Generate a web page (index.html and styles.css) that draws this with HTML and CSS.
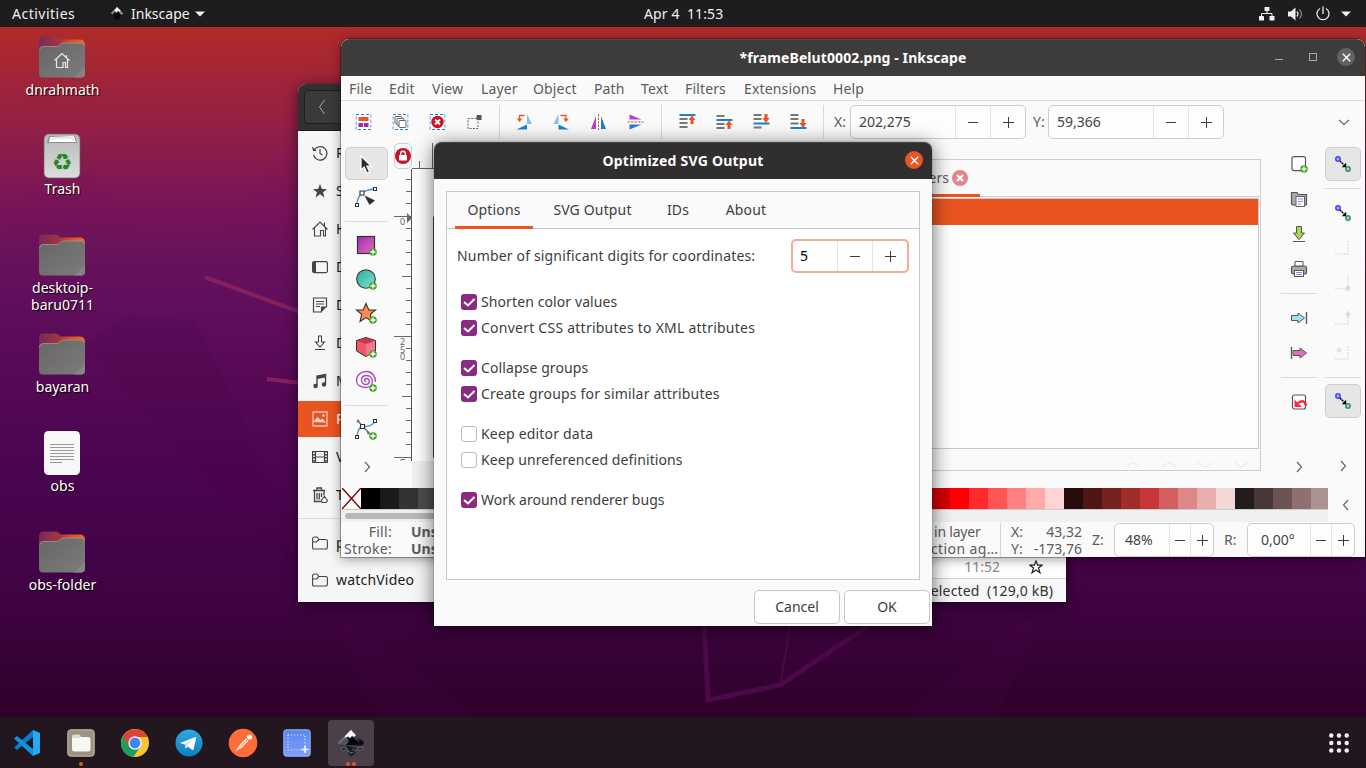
FILE: index.html
```html
<!DOCTYPE html>
<html lang="en">
<head>
<meta charset="utf-8">
<title>Desktop</title>
<link rel="stylesheet" href="styles.css">
</head>
<body>
<svg class="defs" width="0" height="0">
  <defs>
    <linearGradient id="gFolder" x1="0" x2="1"><stop offset="0" stop-color="#77285b"/><stop offset=".45" stop-color="#a5363f"/><stop offset=".7" stop-color="#dd4f22"/><stop offset="1" stop-color="#f0642b"/></linearGradient>
    <linearGradient id="gGrey" x1="0" y1="0" x2="1" y2="1"><stop offset="0" stop-color="#666"/><stop offset="1" stop-color="#7c7c7c"/></linearGradient>
    <linearGradient id="gTrash" x1="0" y1="0" x2="0" y2="1"><stop offset="0" stop-color="#b9b9b9"/><stop offset="1" stop-color="#dcdcdc"/></linearGradient>
    <linearGradient id="gRect" x1="0" y1="0" x2="1" y2="1"><stop offset="0" stop-color="#9b2fae"/><stop offset="1" stop-color="#e86cc0"/></linearGradient>
    <linearGradient id="gCirc" x1="0" y1="0" x2="1" y2="1"><stop offset="0" stop-color="#2fa8a0"/><stop offset="1" stop-color="#7fe6c8"/></linearGradient>
    <linearGradient id="gTele" x1="0" y1="0" x2="0" y2="1"><stop offset="0" stop-color="#2fa9df"/><stop offset="1" stop-color="#0d7fbe"/></linearGradient>
    <linearGradient id="gInk" x1="0" y1="0" x2="1" y2=".6"><stop offset="0" stop-color="#fff"/><stop offset=".3" stop-color="#a9acb3"/><stop offset=".5" stop-color="#15161c"/><stop offset=".75" stop-color="#3c4352"/><stop offset="1" stop-color="#0a0b10"/></linearGradient>
    <linearGradient id="gShot" x1="0" y1="0" x2="0" y2="1"><stop offset="0" stop-color="#5b86ee"/><stop offset="1" stop-color="#7f9ff8"/></linearGradient>
    <symbol id="folder" viewBox="0 0 46 42">
      <path d="M0 5Q0 .5 4 .5H17Q19 .5 20 2L21.500 3.500H41Q46 3.500 46 9V24H0Z" fill="url(#gFolder)"/>
      <path d="M0 15Q0 10.500 4 10.500H18Q20 10.500 21 9L22 8Q23 7 25 7H42Q46 7 46 11V37.500Q46 41.500 42 41.500H4Q0 41.500 0 37.500Z" fill="url(#gGrey)"/>
      <path d="M0.500 14Q1 10.500 4 10.500H18Q20 10.500 21 9L22 8Q23 7 25 7H42Q45 7 45.500 10" fill="none" stroke="#a0a0a0" stroke-width=".7"/>
      <path d="M46 31V37.500Q46 41.500 42 41.500H35.500Z" fill="#858585"/>
    </symbol>
    <symbol id="plusdot" viewBox="0 0 8 8"><circle cx="4" cy="4" r="3.800" fill="#45a52a"/><path d="M4 1.500V6.500M1.500 4H6.500" stroke="#fff" stroke-width="1.400"/></symbol>
    <symbol id="snap" viewBox="0 0 18 18">
      <circle cx="4" cy="4" r="2.200" fill="#9cb0ff" stroke="#4545f5" stroke-width="1.500"/>
      <circle cx="14" cy="14" r="2.200" fill="#9fd0f0" stroke="#3f9150" stroke-width="1.500"/>
      <path d="M6 6L10.500 10.500" stroke="#000" stroke-width="1.400" stroke-dasharray="2 .6"/><path d="M12.200 7.800V12.200H7.800Z" fill="#000"/>
    </symbol>
    <symbol id="minus" viewBox="0 0 12 12"><path d="M1 6.500H11" stroke="#3d3d3d"/></symbol>
    <symbol id="plus" viewBox="0 0 12 12"><path d="M1 6.500H12M6.500 1V12" stroke="#3d3d3d"/></symbol>
    <symbol id="check" viewBox="0 0 16 16"><rect width="16" height="16" rx="3" fill="#8a2a80"/><path d="M3 8L7 11.500L13.500 5" fill="none" stroke="#fff" stroke-width="2"/></symbol>
    <symbol id="right" viewBox="0 0 12 12"><path d="M4 1L8.500 6L4 11" fill="none" stroke="#666" stroke-width="1.200"/></symbol>
    <symbol id="selframe" viewBox="0 0 16 16"><rect x=".5" y=".5" width="15" height="15" fill="none" stroke="#1e82d8" stroke-dasharray="3 2"/></symbol>
  </defs>
</svg>

<header class="topbar">
  <span class="activities">Activities</span>
  <span class="appmenu">
    <svg width="14" height="14" viewBox="0 0 26 26"><path d="M13 0L25 12Q26 15 21 15L17 17L20 20L13 25L7 20L9 17L5 15Q0 15 1 12Z" fill="#080808"/><path d="M1 12L13 0L25 12Q20 17 18 11L15 8L12 12L9 9L5 14Z" fill="#8a8a8a"/><path d="M13 0L20 7L18 9L15 7L12 9L9 7L6 9Z" fill="#f5f5f5"/></svg>
    <span>Inkscape</span>
    <svg width="10" height="6" viewBox="0 0 10 6"><path d="M0 .5H10L5 5.500Z" fill="#f2f2f2"/></svg>
  </span>
  <span class="clock">Apr 4&nbsp; 11:53</span>
  <span class="tray">
    <svg width="16" height="14" viewBox="0 0 16 14" fill="#f0f0f0"><rect x="5.500" y="0" width="5" height="4" rx=".5"/><rect x="0" y="9" width="5" height="4.500" rx=".5"/><rect x="10.500" y="9" width="5" height="4.500" rx=".5"/><path d="M8 4V6.500M2.500 9V6.500H13V9" fill="none" stroke="#f0f0f0"/></svg>
    <svg width="15" height="14" viewBox="0 0 15 14"><path d="M0 4.500H3L7.500 .5V13.500L3 9.500H0Z" fill="#f0f0f0"/><path d="M9 4.500Q11 7 9 9.500" fill="none" stroke="#ddd" stroke-width="1.300"/><path d="M11.500 2.500Q15.500 7 11.500 11.500" fill="none" stroke="#888" stroke-width="1.200"/></svg>
    <svg width="14" height="15" viewBox="0 0 14 15"><path d="M4 2.500A6 6 0 1 0 10 2.500M7 .5V8" fill="none" stroke="#ececec" stroke-width="1.300"/></svg>
    <svg width="10" height="6" viewBox="0 0 10 6"><path d="M0 .5H10L5 5.500Z" fill="#f2f2f2"/></svg>
  </span>
</header>

<main class="desktop">
  <svg class="wallpaper" viewBox="0 27 1366 690" width="1366" height="690">
    <path d="M0 260L190 470L300 565V130L180 290L60 130Z" fill="#7a1a66" opacity=".05"/>
    <path d="M85 345L125 315L195 320L290 520V560L175 450Z" fill="#31002f" opacity=".08"/>
    <path d="M330 610L480 716H375Z M1040 610L1000 716H900Z" fill="#660b60" opacity=".08"/>
    <path d="M205 277L300 312M267 379L300 383" stroke="#85205f" stroke-width="4"/>
    <path d="M704 620L708 700L780 685L880 618" fill="none" stroke="#4d0849" stroke-width="5"/>
    <path d="M791 620L780 686" stroke="#4d0849" stroke-width="2"/>
  </svg>

  <section class="shortcuts">
    <div class="shortcut"><svg width="46" height="46" viewBox="0 0 46 46"><use href="#folder" x="0" y="2" width="46" height="42"/><path d="M15.500 26.500L23 19.500L30.500 26.500M17.500 25V33.500H24V28.500H26.500V33.500H28.500V25M27.500 21V24" fill="none" stroke="#e8e8e8" stroke-width="1.200"/></svg><span>dnrahmath</span></div>
    <div class="shortcut"><svg width="46" height="46" viewBox="0 0 46 46"><rect x="5" y="1" width="36" height="44" rx="5" fill="url(#gTrash)" stroke="#666" stroke-width=".7"/><path d="M8 10L10 3H36L38 10Z" fill="#8b8b8b"/><path d="M10 9L11 4L35 3L37 9Z" fill="#fff"/><path d="M12 7L15 5H33L35 8" fill="none" stroke="#bbb" stroke-width=".7"/><text x="23" y="36.500" class="recycle">♻</text></svg><span>Trash</span></div>
    <div class="shortcut"><svg width="46" height="46"><use href="#folder" y="2" width="46" height="42"/></svg><span>desktoip-<br>baru0711</span></div>
    <div class="shortcut"><svg width="46" height="46"><use href="#folder" y="2" width="46" height="42"/></svg><span>bayaran</span></div>
    <div class="shortcut"><svg width="46" height="46" viewBox="0 0 46 46"><rect x="5" y="1" width="36" height="44" rx="4.500" fill="#f7f7f7"/><path d="M11 14.500H35M11 17.500H35M11 20.500H35M11 23.500H35M11 26.500H35M11 29.500H35M11 32.500H23" stroke="#999"/></svg><span>obs</span></div>
    <div class="shortcut"><svg width="46" height="46"><use href="#folder" y="2" width="46" height="42"/></svg><span>obs-folder</span></div>
  </section>

  <section class="window files">
    <div class="files-head"><span class="back"><svg width="10" height="18" viewBox="0 0 10 18"><path d="M7.500 2L2.500 9L7.500 16" fill="none" stroke="#aaa"/></svg></span></div>
    <div class="files-body">
      <nav class="places">
        <div class="place"><svg viewBox="0 0 16 16"><path d="M2.500 4.500A6.800 6.800 0 1 1 1.500 10M8 4V8.500L10.500 10" fill="none" stroke="#444" stroke-width="1.200"/><path d="M0 1.500L1 6H5Z" fill="#444"/></svg><span>Recent</span></div>
        <div class="place"><svg viewBox="0 0 16 16"><path d="M8 1L9.900 6H15L11 9.200L12.500 14.500L8 11.300L3.500 14.500L5 9.200L1 6H6.100Z" fill="#444"/></svg><span>Starred</span></div>
        <div class="place"><svg viewBox="0 0 16 16"><path d="M.5 8.500L8 1L15.500 8.500M2.500 7V15H8.500V9.500H11.500V15H13.500V7M12.500 1.500V5" fill="none" stroke="#444" stroke-width="1.100"/></svg><span>Home</span></div>
        <div class="place"><svg viewBox="0 0 16 16"><rect x=".6" y="2.600" width="14.800" height="11" rx="1.500" fill="none" stroke="#444" stroke-width="1.200"/><path d="M1 3H4V13H1Z" fill="#444"/></svg><span>Desktop</span></div>
        <div class="place"><svg viewBox="0 0 16 16"><path d="M14.500 10V1H1.500V15H9.500V10H14.500M4 4.500H12M4 7H12M4 9.500H8" fill="none" stroke="#444" stroke-width="1.200"/><path d="M9.500 10H14.500L9.500 15Z" fill="#444"/></svg><span>Documents</span></div>
        <div class="place"><svg viewBox="0 0 16 16"><path d="M6.500 1H9.500V7H12.500L8 12L3.500 7H6.500ZM3 14.500H13" fill="none" stroke="#444" stroke-width="1.100"/></svg><span>Downloads</span></div>
        <div class="place"><svg viewBox="0 0 16 16"><path d="M5 13V3L13.500 1.500V11" fill="none" stroke="#444" stroke-width="1.400"/><path d="M5 3L13.500 1.500V4.500L5 6Z" fill="#444"/><circle cx="3.500" cy="13" r="2.200" fill="#444"/><circle cx="12" cy="11.500" r="2.200" fill="#444"/></svg><span>Music</span></div>
        <div class="place on"><svg viewBox="0 0 16 16"><rect x="1" y="1" width="14" height="14" fill="none" stroke="#fcd9cc" stroke-width="1.200"/><path d="M1 11L5.500 6L8.500 9L10.500 7.500L14 11.500Z" fill="#fcd9cc"/><circle cx="11.500" cy="4.500" r="1.200" fill="#fcd9cc"/></svg><span>Pictures</span></div>
        <div class="place"><svg viewBox="0 0 16 16"><path d="M.5 2.500H15.500V13.500H.5ZM3.500 2V14M12.500 2V14M3.500 8H12.500" fill="none" stroke="#444" stroke-width="1.200"/><path d="M2 2V14M14 2V14" stroke="#444" stroke-width="2" stroke-dasharray="1.500 1.500"/></svg><span>Videos</span></div>
        <div class="place"><svg viewBox="0 0 16 16"><path d="M1 3.500H13M5 3V1H9.500V3M2.500 4V14.500H9M12 4V8.500M5 6V12.500M7.300 6V12.500M9.500 6V10" fill="none" stroke="#444" stroke-width="1.300"/><path d="M12.500 9.500L15.500 13.500L14 15.500H10L9.500 13Z" fill="none" stroke="#444" stroke-width="1.100"/></svg><span>Trash</span></div>
        <hr>
        <div class="place"><svg viewBox="0 0 16 16"><path d="M.6 13.500V4Q.6 2 2.500 2H5L7 4.500H13.500Q15.400 4.500 15.400 6V12Q15.400 14 13.500 14H2Q.6 14 .6 12.500M.6 7H4.500L7 4.500" fill="none" stroke="#444" stroke-width="1.100"/></svg><span>project</span></div>
        <div class="place"><svg viewBox="0 0 16 16"><path d="M.6 13.500V4Q.6 2 2.500 2H5L7 4.500H13.500Q15.400 4.500 15.400 6V12Q15.400 14 13.500 14H2Q.6 14 .6 12.500M.6 7H4.500L7 4.500" fill="none" stroke="#444" stroke-width="1.100"/></svg><span class="wide">watchVideo</span></div>
      </nav>
      <div class="listing">
        <div class="file-row"><span>11:52</span><svg width="14" height="14" viewBox="0 0 14 14"><path d="M7 1L8.700 5.200H13L9.500 8L11 12.800L7 10L3 12.800L4.500 8L1 5.200H5.300Z" fill="none" stroke="#222" stroke-width="1.200"/></svg></div>
        <div class="file-status">selected&nbsp; (129,0 kB)</div>
      </div>
    </div>
  </section>

  <section class="window inkscape">
    <div class="titlebar">
      <span class="title">*frameBelut0002.png - Inkscape</span>
      <span class="winbtns"><svg width="10" height="12" viewBox="0 0 10 12"><path d="M1 8.500H9" stroke="#aaa"/></svg><svg width="10" height="10" viewBox="0 0 10 10"><rect x="1.500" y="1.500" width="7" height="7" fill="none" stroke="#aaa"/></svg><i class="round grey"><svg width="9" height="9" viewBox="0 0 9 9"><path d="M.8 .8L8.200 8.200M8.200 .8L.8 8.200" stroke="#fff" stroke-width="1.400"/></svg></i></span>
    </div>
    <div class="menubar"><span>File</span><span>Edit</span><span>View</span><span>Layer</span><span>Object</span><span>Path</span><span>Text</span><span>Filters</span><span>Extensions</span><span>Help</span></div>
    <div class="toolbar">
      <svg viewBox="0 0 16 16"><use href="#selframe"/><path d="M3 3H13V7H3Z" fill="#e95420"/><path d="M3 9H7.500V13H3ZM8.500 9H13V13H8.500Z" fill="#a02cae"/></svg>
      <svg viewBox="0 0 16 16"><use href="#selframe"/><g fill="#fff" stroke="#666"><rect x="2.500" y="2.500" width="7" height="7" rx="1"/><rect x="4.500" y="4.500" width="7" height="7" rx="1"/><rect x="6.500" y="6.500" width="7" height="7" rx="1"/></g></svg>
      <svg viewBox="0 0 16 16"><use href="#selframe"/><circle cx="8" cy="8" r="6.200" fill="#c7162b"/><path d="M5.500 5.500L10.500 10.500M10.500 5.500L5.500 10.500" stroke="#fff" stroke-width="1.800"/></svg>
      <svg viewBox="0 0 16 16"><path d="M10 1H15V6H10Z" fill="#555"/><rect x="1.500" y="4.500" width="10" height="10" fill="none" stroke="#666" stroke-dasharray="2 1.300"/></svg>
      <i class="sep"></i>
      <svg viewBox="0 0 16 16"><path d="M10.500 0L15.500 10H10.500Z" fill="#89bfe6"/><path d="M0 15.500L10.500 10.500V15.500Z" fill="#1e7ed2"/><path d="M8 1.500H3V5.500" fill="none" stroke="#e95420" stroke-width="1.300"/><path d="M.2 4.500H5.800L3 8Z" fill="#e95420"/></svg>
      <svg viewBox="0 0 16 16"><path d="M5 0V10H0Z" fill="#89bfe6"/><path d="M5 10.500L15.500 15.500H5Z" fill="#1e7ed2"/><path d="M7 1.500H12.500V5.500" fill="none" stroke="#e95420" stroke-width="1.300"/><path d="M9.700 4.500H15.300L12.500 8Z" fill="#e95420"/></svg>
      <svg viewBox="0 0 16 16"><path d="M5.500 2V15H.5Z" fill="#c13bc7"/><path d="M10.500 2V15H15.500Z" fill="#1e7ed2"/><path d="M8 0V16" stroke="#e95420" stroke-dasharray="2.500 1"/></svg>
      <svg viewBox="0 0 16 16"><path d="M2 5.500V.5L14 5.500Z" fill="#c13bc7"/><path d="M2 10.500H14L2 15.500Z" fill="#1e7ed2"/><path d="M0 8H16" stroke="#e95420" stroke-dasharray="2.500 1"/></svg>
      <i class="sep second"></i>
      <svg viewBox="0 0 16 16"><path d="M0 1H16" stroke="#1e7ed2" stroke-width="2"/><path d="M0 5H8M0 9H8M0 13H8" stroke="#777" stroke-width="1.800"/><path d="M11 10V6H9L12.500 1.500L16 6H14V10Z" fill="#e95420"/></svg>
      <svg viewBox="0 0 16 16"><path d="M0 6H16" stroke="#1e7ed2" stroke-width="2"/><path d="M0 2H8M0 10H8M0 14H8" stroke="#777" stroke-width="1.800"/><path d="M11 15V11H9L12.500 6.500L16 11H14V15Z" fill="#e95420"/></svg>
      <svg viewBox="0 0 16 16"><path d="M0 9.500H16" stroke="#1e7ed2" stroke-width="2"/><path d="M0 1H8M0 5H8M0 13.500H8" stroke="#777" stroke-width="1.800"/><path d="M11 0V4H9L12.500 9L16 4H14V0Z" fill="#e95420"/></svg>
      <svg viewBox="0 0 16 16"><path d="M0 14H16" stroke="#1e7ed2" stroke-width="2"/><path d="M0 1H8M0 5H8M0 9.500H8" stroke="#777" stroke-width="1.800"/><path d="M11 5V9H9L12.500 14L16 9H14V5Z" fill="#e95420"/></svg>
      <i class="sep"></i>
      <span class="coord">X:</span>
      <span class="spin"><b>202,275</b><i><svg><use href="#minus"/></svg></i><i><svg><use href="#plus"/></svg></i></span>
      <span class="coord">Y:</span>
      <span class="spin"><b>59,366</b><i><svg><use href="#minus"/></svg></i><i><svg><use href="#plus"/></svg></i></span>
      <svg class="more" viewBox="0 0 12 12"><path d="M1 4L6 8.500L11 4" fill="none" stroke="#666" stroke-width="1.200"/></svg>
    </div>
    <div class="work">
      <div class="tools">
        <i class="tool active"><svg viewBox="0 0 22 22"><path d="M6 3V17L9.200 14L12 20L14.500 18.800L11.800 13.200H16Z" fill="#2b2b2b" stroke="#fff" stroke-width="1.200"/></svg></i>
        <i class="tool"><svg viewBox="0 0 22 22"><path d="M2 19Q2 4 20 3" fill="none" stroke="#4a90d9" stroke-width="1.300"/><path d="M.5 17.500H3.500V20.500H.5ZM18.500 1.500H21.500V4.500H18.500ZM5 5H9V9H5Z" fill="#fff" stroke="#333" stroke-width="1.100"/><path d="M9.500 9.500L20 14.500L14.500 19Z" fill="#2d2d2d"/></svg></i>
        <hr>
        <i class="tool"><svg viewBox="0 0 22 22"><rect x="2.500" y="2.500" width="17" height="17" fill="url(#gRect)" stroke="#333" stroke-width="1.200"/><use href="#plusdot" x="14" y="14" width="8" height="8"/></svg></i>
        <i class="tool"><svg viewBox="0 0 22 22"><circle cx="11" cy="11" r="9.300" fill="url(#gCirc)" stroke="#333" stroke-width="1.100"/><use href="#plusdot" x="14" y="14" width="8" height="8"/></svg></i>
        <i class="tool"><svg viewBox="0 0 22 22"><path d="M11 1.500L13.800 8H20.500L15.300 12.300L17 19.500L11 15.600L5 19.500L6.700 12.300L1.500 8H8.200Z" fill="#ff8a4c" stroke="#333" stroke-width="1.100"/><use href="#plusdot" x="14" y="14" width="8" height="8"/></svg></i>
        <i class="tool"><svg viewBox="0 0 22 22"><path d="M1.500 4.500L11 1.500L20.500 4.500V15L11 20.500L1.500 15Z" fill="#ef5766" stroke="#333"/><path d="M2 4.700L11 2L20 4.700L11 8Z" fill="#c93648"/><path d="M11 8V20L20 15V5Z" fill="#f1788a"/><use href="#plusdot" x="14" y="14" width="8" height="8"/></svg></i>
        <i class="tool"><svg viewBox="0 0 22 22"><path d="M11 11.500C9 11.500 9 8.500 11.500 8.500C15 8.500 15.500 14.500 11 14.500C5 14.500 5 5.500 11.500 5.500C19.500 5.500 19.500 17.500 11 17.500C4 17.500 1.500 14 1.500 10.500C1.500 5 6 1.500 11.500 1.500C17 1.500 20.500 6 20.500 12" fill="none" stroke="#a84cc0" stroke-width="1.400"/><use href="#plusdot" x="14" y="14" width="8" height="8"/></svg></i>
        <hr>
        <i class="tool"><svg viewBox="0 0 22 22"><path d="M3 3L14 15" stroke="#666" stroke-width="1.300"/><circle cx="3" cy="3" r="1.500" fill="#777"/><circle cx="13.500" cy="15" r="1.500" fill="#777"/><path d="M2 19Q3 9 7.500 8.500Q17 9 20 3" fill="none" stroke="#4a90d9" stroke-width="1.300"/><path d="M.5 17.500H3.500V20.500H.5ZM18.500 1.500H21.500V4.500H18.500ZM5.500 6.500H9.500V10.500H5.500Z" fill="#fff" stroke="#333" stroke-width="1.100"/><use href="#plusdot" x="14" y="14" width="8" height="8"/></svg></i>
        <i class="tool chev"><svg><use href="#right"/></svg></i>
      </div>
      <div class="rulers">
        <i class="lock"><svg width="16" height="16" viewBox="0 0 16 16"><circle cx="8" cy="8" r="8" fill="#c7162b"/><rect x="4" y="7" width="8" height="5.500" rx=".7" fill="#fff"/><path d="M5.700 7V5.500Q5.700 3.300 8 3.300Q10.300 3.300 10.300 5.500V7" fill="none" stroke="#fff" stroke-width="1.400"/></svg></i>
        <svg class="vruler" width="18" height="293" viewBox="394 169 18 293">
          <path d="M411.500 169V461" stroke="#555"/>
          <path d="M406 179.500H411M406 191.500H411M406 203.500H411M394 216.500H411M406 228.500H411M406 240.500H411M406 252.500H411M406 264.500H411M402 276.500H411M406 288.500H411M406 300.500H411M406 312.500H411M406 324.500H411M394 336.500H411M406 348.500H411M406 360.500H411M406 372.500H411M406 384.500H411M402 396.500H411M406 408.500H411M406 420.500H411M406 432.500H411M406 444.500H411M394 457.500H411" stroke="#666"/>
          <path d="M407 213L412 218L407 223Z" fill="#666"/>
          <path d="M401 461V459.500H405" fill="none" stroke="#777"/>
          <g class="ruler-num"><text x="400" y="225">0</text><text x="400" y="345">2</text><text x="400" y="352.500">5</text><text x="400" y="360">0</text></g>
        </svg>
      </div>
      <div class="canvas">
        <svg width="480" height="345" viewBox="412 143 480 345"><path d="M412 168.500H892M419.500 161V168M432.500 143V168" stroke="#666"/><path d="M412 169H892V461H412Z" fill="#fff"/><path d="M412 461H892V488H412Z" fill="#f0f0f0"/><path d="M433.500 216.500V457.500" stroke="#444"/></svg>
      </div>
      <div class="panel">
        <div class="panel-tab"><span>Layers</span><svg width="16" height="16" viewBox="0 0 16 16"><circle cx="8" cy="8" r="8" fill="#e08691"/><path d="M5 5L11 11M11 5L5 11" stroke="#fff" stroke-width="2"/></svg></div>
        <div class="layer-list"><div class="layer-row"></div></div>
        <div class="panel-foot"><svg width="130" height="12" viewBox="0 0 130 12" fill="none" stroke="#ececec" stroke-width="1.200"><path d="M4 8L11 3.500L18 8M40 8L47 3.500L54 8M76 3.500L83 8L90 3.500M112 3.500L119 8L126 3.500"/></svg></div>
      </div>
      <div class="commands">
        <i><svg viewBox="0 0 18 18"><rect x="2" y="1.600" width="13.500" height="14" rx="2" fill="#fff" stroke="#555" stroke-width="1.200"/><use href="#plusdot" x="10" y="10" width="8" height="8"/></svg></i>
        <i><svg viewBox="0 0 18 18"><path d="M1.500 14V2.500H7L8.500 4.500H16.500V15H2.500Z" fill="#aaa" stroke="#555" stroke-width="1.200"/><rect x="6" y="6.500" width="8.500" height="10" fill="#fff" stroke="#666"/><path d="M8 9H13M8 11.500H13M8 14H11" stroke="#8a8aee"/></svg></i>
        <i><svg viewBox="0 0 18 18"><path d="M6.500 1.500H11.500V8H14.500L9 14.500L3.500 8H6.500Z" fill="#a2d84a" stroke="#555"/><path d="M3 16.500H15" stroke="#555" stroke-width="1.200"/></svg></i>
        <i><svg viewBox="0 0 18 18"><rect x="1.500" y="6" width="15" height="8" rx="2" fill="#aaa" stroke="#555" stroke-width="1.200"/><path d="M5 6V1.500H13V6Z" fill="#fff" stroke="#555"/><rect x="4.500" y="10.500" width="9" height="6" fill="#fff" stroke="#555"/><path d="M6 12.500H12M6 14.500H12" stroke="#8a8aee"/></svg></i>
        <hr>
        <i><svg viewBox="0 0 18 18"><path d="M1.500 6.500H8V4L14.500 9L8 14V11.500H1.500Z" fill="#a6dff5" stroke="#555"/><path d="M16.500 3V15" stroke="#555" stroke-width="1.300"/></svg></i>
        <i><svg viewBox="0 0 18 18"><path d="M3 6.500H10V4L16.500 9L10 14V11.500H3Z" fill="#e86cc4" stroke="#555"/><path d="M1.500 3V15" stroke="#555" stroke-width="1.300"/></svg></i>
        <hr>
        <i><svg viewBox="0 0 18 18"><rect x="2.500" y="2" width="13" height="14" rx="2" fill="#fff" stroke="#555" stroke-width="1.200"/><path d="M16 12.500Q14.500 5.500 8 10" fill="none" stroke="#ef2a44" stroke-width="2.600"/><path d="M4.500 6.500V14H12Z" fill="#ef2a44"/></svg></i>
        <i class="chev"><svg><use href="#right"/></svg></i>
      </div>
      <div class="snaps">
        <i class="active"><svg><use href="#snap"/></svg></i>
        <hr>
        <i><svg><use href="#snap"/></svg></i>
        <i><svg viewBox="0 0 18 18"><path d="M1 15H14V2" fill="none" stroke="#dbe9d9" stroke-width="1.500" stroke-dasharray="2 1"/></svg></i>
        <i><svg viewBox="0 0 18 18"><path d="M1 14.500H14V2" fill="none" stroke="#dde3dd" stroke-width="1.500" stroke-dasharray="2 1"/><circle cx="14" cy="14.500" r="2.500" fill="#d2e2d5"/></svg></i>
        <i><svg viewBox="0 0 18 18"><path d="M1 15H14V2" fill="none" stroke="#dde3dd" stroke-width="1.500" stroke-dasharray="2 1"/><circle cx="14" cy="5.500" r="2.300" fill="#d2e2d5"/></svg></i>
        <i><svg viewBox="0 0 18 18"><path d="M1 15H14V2" fill="none" stroke="#dde3dd" stroke-width="1.500" stroke-dasharray="2 1"/><circle cx="5" cy="6" r="2" fill="#deeede" stroke="#d0e2d4"/></svg></i>
        <hr>
        <i class="active"><svg><use href="#snap"/></svg></i>
        <i class="chev"><svg><use href="#right"/></svg></i>
      </div>
    </div>
    <div class="palette">
      <div class="swatches">
        <svg width="19" height="21" viewBox="0 0 19 21"><path d="M0 0H19V21H0Z" fill="#fff"/><path d="M0 0L19 21M19 0L0 21" stroke="#800000" stroke-width="1.500"/></svg>
        <b style="background:#000"></b><b style="background:#1a1a1a"></b><b style="background:#333"></b><b style="background:#4d4d4d"></b><b style="background:#666"></b><b class="greys"></b>
        <b style="background:#d40000"></b><b style="background:#f00"></b><b style="background:#ff2a2a"></b><b style="background:#f55"></b><b style="background:#ff8080"></b><b style="background:#faa"></b><b style="background:#ffd5d5"></b><b style="background:#280b0b"></b><b style="background:#501616"></b><b style="background:#782121"></b><b style="background:#a02c2c"></b><b style="background:#c83737"></b><b style="background:#d35f5f"></b><b style="background:#de8787"></b><b style="background:#e9afaf"></b><b style="background:#f4d7d7"></b><b style="background:#241c1c"></b><b style="background:#483737"></b><b style="background:#6c5353"></b><b style="background:#916f6f"></b><b style="background:#ac9393"></b>
      </div>
      <div class="scroll"><i></i></div>
      <svg class="prev" viewBox="0 0 12 12"><path d="M8 1L3.500 6L8 11" fill="none" stroke="#666" stroke-width="1.200"/></svg>
    </div>
    <div class="status">
      <div class="fill"><span>Fill:</span><b>Unset</b><span>Stroke:</span><b>Unset</b></div>
      <div class="hint"><span>in layer</span><span>ction ag…</span></div>
      <div class="pos"><span>X:</span><span>43,32</span><span>Y:</span><span>-173,76</span></div>
      <span class="zl">Z:</span>
      <span class="spin small z"><b>48%</b><i><svg><use href="#minus"/></svg></i><i><svg><use href="#plus"/></svg></i></span>
      <span class="rl">R:</span>
      <span class="spin small r"><b>0,00°</b><i><svg><use href="#minus"/></svg></i><i><svg><use href="#plus"/></svg></i></span>
    </div>
  </section>

  <section class="window dialog">
    <div class="titlebar"><span class="title">Optimized SVG Output</span><i class="round orange"><svg width="9" height="9" viewBox="0 0 9 9"><path d="M.8 .8L8.200 8.200M8.200 .8L.8 8.200" stroke="#fff" stroke-width="1.400"/></svg></i></div>
    <div class="notebook">
      <div class="tabs"><span class="tab on">Options</span><span class="tab">SVG Output</span><span class="tab">IDs</span><span class="tab">About</span></div>
      <div class="page">
        <div class="digits"><span>Number of significant digits for coordinates:</span><span class="spin focus"><b>5</b><i><svg><use href="#minus"/></svg></i><i><svg><use href="#plus"/></svg></i></span></div>
        <label><svg><use href="#check"/></svg><span class="snug">Shorten color values</span></label>
        <label><svg><use href="#check"/></svg><span class="widest">Convert CSS attributes to XML attributes</span></label>
        <label class="gap"><svg><use href="#check"/></svg><span class="snug">Collapse groups</span></label>
        <label><svg><use href="#check"/></svg><span class="wide">Create groups for similar attributes</span></label>
        <label class="gap"><i class="box"></i><span class="wide">Keep editor data</span></label>
        <label><i class="box"></i><span class="snug">Keep unreferenced definitions</span></label>
        <label class="gap"><svg><use href="#check"/></svg><span>Work around renderer bugs</span></label>
      </div>
    </div>
    <div class="actions"><span class="btn">Cancel</span><span class="btn">OK</span></div>
  </section>
</main>

<footer class="dock">
  <i class="app"><svg width="28" height="28" viewBox="0 0 28 28"><path d="M20 1L27 4V24L20 27Z" fill="#27a9f2"/><path d="M20 1V8L4 21L1 18.500Z" fill="#0a7bc8"/><path d="M20 27V20L4 7L1 9.500Z" fill="#1591dc"/></svg></i>
  <i class="app"><svg width="28" height="28" viewBox="0 0 28 28"><rect x=".8" y=".8" width="26.400" height="26.400" rx="3" fill="#9b9480" stroke="#c4bfae"/><path d="M5 8Q5 6 7 6H12L14 8H21Q23.500 8 23.500 10V20Q23.500 22.500 21 22.500H7.500Q5 22.500 5 20Z" fill="#f8f7f3"/><path d="M5 9H12L14 7L12 5.500H7Q5 5.500 5 8Z" fill="#dedace"/></svg><em></em></i>
  <i class="app"><svg width="28" height="28" viewBox="0 0 28 28"><circle cx="14" cy="14" r="14" fill="#fbc833"/><path d="M14 14L1.900 7A14 14 0 0 0 12.500 27.900L19.500 17Z" fill="#1aa05a"/><path d="M1.900 7A14 14 0 0 1 26.500 8H14L8 17.500Z" fill="#dc4236"/><circle cx="14" cy="14" r="6.700" fill="#f5f5f5"/><circle cx="14" cy="14" r="5.400" fill="#4285f4"/></svg></i>
  <i class="app"><svg width="28" height="28" viewBox="0 0 28 28"><circle cx="14" cy="14" r="13.500" fill="url(#gTele)"/><path d="M5 14L20.500 8Q21.500 8 21.200 9L18.500 20.500Q18 21.500 17 20.800L12.500 17.500L10.500 19.800L9.800 15.500Z" fill="#fff"/><path d="M9.800 15.500L18 10L12.500 16L10.500 19.800Z" fill="#c8daea"/></svg></i>
  <i class="app"><svg width="30" height="30" viewBox="0 0 30 30"><circle cx="15" cy="15" r="14.300" fill="#ff6c37"/><circle cx="21.500" cy="9" r="2.600" fill="#fff"/><path d="M7 23.500L11.500 17L18 10.500L20.500 13L13.500 20Z" fill="#ffe3d8"/><path d="M12.500 18.500L19 12" stroke="#ff6c37" stroke-width=".8"/></svg></i>
  <i class="app"><svg width="28" height="28" viewBox="0 0 28 28"><rect x=".8" y=".8" width="26.400" height="26.400" rx="2.500" fill="url(#gShot)" stroke="#9ab3ff"/><rect x="5" y="6" width="17" height="15" fill="none" stroke="#d4dfff" stroke-width="1.200" stroke-dasharray="1.300 1.700"/><path d="M22 17V24M18.500 20.500H25.500" stroke="#fff" stroke-width="1.500"/></svg></i>
  <i class="app current"><svg width="28" height="28" viewBox="0 0 28 28"><path d="M14 .5L26 12.500Q28.500 15.500 23.500 16.500H4.500Q-.5 15.500 2 12.500Z" fill="url(#gInk)"/><path d="M14 1L19 6L17 8L15 7L13 9L11 7.500L7 9.500L9 6Z" fill="#fff"/><path d="M2 13L7 8L11 8L12 13L9 16H4.500Q1 15.500 2 13Z" fill="#777c86" opacity=".55"/><path d="M10 8L13 10L15 7.500L22 14L17 16H9L12 12Z" fill="#050507"/><path d="M9 17.500L13 17L16 18.500L20 19L17.500 21.500L19 23.500L14.500 27.500L11 24.500L12.500 22Z" fill="#171a22"/><path d="M4 19H9.500L8 21.500H5ZM21 18.500H26L24 21H22ZM10 22L15 24M15 20.500L20 21.500M13 24.500L17 23" fill="#12151c" stroke="#5f7187" stroke-width=".8"/></svg><em></em><em class="two"></em></i>
  <svg class="grid" width="20" height="20" viewBox="0 0 20 20" fill="#f4f4f4"><circle cx="2.300" cy="2.500" r="2.200"/><circle cx="10" cy="2.500" r="2.200"/><circle cx="17.700" cy="2.500" r="2.200"/><circle cx="2.300" cy="10" r="2.200"/><circle cx="10" cy="10" r="2.200"/><circle cx="17.700" cy="10" r="2.200"/><circle cx="2.300" cy="17.500" r="2.200"/><circle cx="10" cy="17.500" r="2.200"/><circle cx="17.700" cy="17.500" r="2.200"/></svg>
</footer>
</body>
</html>
```
FILE: styles.css
```css
* { box-sizing: border-box; }
body { margin: 0; width: 1366px; height: 768px; overflow: hidden; display: flex; flex-direction: column; font: 14px/18px "Noto Sans", "Open Sans", sans-serif; color: #3d3d3d; }
i, em { font-style: normal; }
b { font-weight: 400; }
svg { display: block; flex: none; }
hr { border: 0; margin: 0; flex: none; }
.defs { position: absolute; }
.snug { letter-spacing: .1px; }
.wide { letter-spacing: .19px; }
.widest { letter-spacing: .24px; }

/* Top bar */
.topbar { height: 27px; flex: none; background: #1d1d1d; color: #f0f0f0; display: grid; grid-template-columns: 98px 534px 1fr auto; align-items: center; padding: 0 15px 0 12px; }
.activities { letter-spacing: .5px; }
.clock { letter-spacing: .1px; }
.appmenu, .tray { display: flex; align-items: center; }
.appmenu { gap: 7px; }
.appmenu svg:last-child { margin-left: -2px; }
.tray { gap: 13px; }
.tray svg:last-child { margin-left: -2px; }

/* Wallpaper and shortcuts */
.desktop { position: relative; height: 690px; flex: none; background: linear-gradient(#b02b29 0, #8f1e48 110px, #741459 185px, #5f0f5d 270px, #560955 350px, #4a0551 440px, #400343 570px, #2e0129 690px); overflow: hidden; }
.wallpaper { position: absolute; inset: 0; }
.shortcuts { position: absolute; left: 12px; top: 7px; width: 101px; display: grid; grid-auto-rows: 99px; }
.shortcut { display: flex; flex-direction: column; align-items: center; color: #fff; text-align: center; line-height: 17px; text-shadow: 1px 1px 1px #000; }
.shortcut svg { margin-left: -1px; }
.shortcut span { margin-top: 1px; }
.recycle { font: 23px "DejaVu Sans", sans-serif; fill: #23881f; text-anchor: middle; text-shadow: none; }

.window { position: absolute; display: flex; flex-direction: column; }

/* File manager */
.files { left: 298px; top: 57px; width: 768px; height: 518px; border-radius: 8px 8px 0 0; background: #f6f6f6; box-shadow: 0 2px 14px rgba(0,0,0,.55); color: #1a1a1a; }
.files-head { height: 47px; flex: none; background: #303030; border-radius: 8px 8px 0 0; border-bottom: 1px solid #1c1c1c; padding: 6px; }
.back { display: flex; align-items: center; padding-left: 12px; width: 80px; height: 34px; border: 1px solid #1f1f1f; border-radius: 5px; background: #3a3a3a; }
.files-body { flex: 1; display: flex; min-height: 0; }
.places { width: 180px; padding-top: 4px; display: flex; flex-direction: column; }
.place { height: 36px; margin-bottom: 2px; flex: none; display: flex; align-items: center; gap: 8px; padding-left: 14px; }
.place svg { width: 16px; height: 16px; }
.place.on { background: #e95420; color: #fff; }
.places hr { height: 1px; background: #dcdcdc; margin: 3px 0 6px; }
.places hr ~ .place { margin-bottom: 1px; }
.listing { flex: 1; display: flex; flex-direction: column; justify-content: flex-end; background: #fff; }
.file-row { height: 24px; display: flex; align-items: center; justify-content: flex-end; gap: 29px; padding-right: 23px; color: #888; border-bottom: 1px solid #d4d4d4; }
.file-status { height: 23px; text-align: right; padding: 3px 13px 0 0; background: #f7f7f7; color: #333; letter-spacing: .15px; }

/* Inkscape */
.titlebar { height: 37px; flex: none; display: flex; align-items: center; justify-content: center; position: relative; color: #fff; border-radius: 8px 8px 0 0; }
.title { font-weight: 700; letter-spacing: .1px; }
.round { width: 18px; height: 18px; border-radius: 50%; display: flex; align-items: center; justify-content: center; }
.grey { background: #626262; }
.orange { background: #e95420; position: absolute; right: 9px; top: 8px; }
.inkscape { left: 341px; top: 12px; width: 1024px; height: 518px; border-radius: 8px 8px 0 0; background: #fafafa; color: #5b5b5b; box-shadow: 0 0 0 1px rgba(0,0,0,.3), 0 2px 12px rgba(0,0,0,.4); overflow: hidden; }
.inkscape > .titlebar { background: #3e3c3b; border-top: 1px solid #4d4b4a; }
.winbtns { position: absolute; right: 10px; top: 8px; display: flex; align-items: center; gap: 24px; }
.winbtns .round { margin-left: -5px; }
.menubar { height: 25px; flex: none; border-bottom: 1px solid #dedede; display: grid; grid-template-columns: 40px 43px 49px 52px 61px 47px 44px 59px 89px auto; padding: 4px 0 0 8px; letter-spacing: .15px; }
.toolbar { height: 42px; flex: none; display: flex; align-items: center; padding-left: 4px; }
.toolbar > svg { width: 37px; height: 16px; }
.toolbar > .sep { flex: none; width: 1px; height: 34px; background: #d9d9d9; margin: 0 6px; }
.toolbar > .second { margin: 0 7px; }
.coord { width: 16px; margin-left: 4px; }
.spin { display: flex; width: 176px; height: 34px; border: 1px solid #cdcdcd; border-radius: 5px; background: #fdfdfd; flex: none; color: #444; }
.spin b { flex: 1; display: flex; align-items: center; padding-left: 8px; }
.spin i { width: 35px; border-left: 1px solid #e4e4e4; display: flex; align-items: center; justify-content: center; }
.spin i svg { width: 12px; height: 12px; }
.toolbar .spin + .coord { margin-left: 7px; width: 15px; }
.toolbar > .more { width: 12px; height: 12px; margin-left: auto; margin-right: 15px; }

.work { height: 345px; flex: none; display: flex; }
.tools { width: 47px; padding: 4px 0 0 4px; margin-right: 6px; display: flex; flex-direction: column; flex: none; }
.tool { height: 34px; flex: none; display: flex; align-items: center; justify-content: center; }
.tool.active { height: 33px; }
.tool svg { width: 22px; height: 22px; margin-right: 2px; }
.active { background: #e6e6e6; border: 1px solid #cfcfcf; border-radius: 5px; }
.tools hr { height: 1px; background: #dcdcdc; margin: 7px 0 6px; }
.tool.chev svg, .commands .chev svg, .snaps .chev svg { width: 12px; height: 12px; margin: 0; }
.tool.chev { margin-top: 4px; }
.rulers { width: 18px; flex: none; }
.lock { display: flex; height: 26px; align-items: center; justify-content: center; border: 1px solid #cfcfcf; border-radius: 5px; }
.ruler-num { font: 9px "Noto Sans", sans-serif; fill: #666; }
.canvas { width: 480px; flex: none; overflow: hidden; }
.panel { flex: 1; margin: 16px 0 17px; border: 1px solid #cdcdcd; display: flex; flex-direction: column; }
.panel-tab { position: relative; height: 37px; flex: none; border-bottom: 1px solid #cdcdcd; display: flex; align-items: center; gap: 3px; }
.panel-tab span { width: 56px; text-align: right; }
.panel-tab::after { content: ""; position: absolute; left: 0; bottom: -1px; width: 87px; height: 3px; background: #e95420; }
.layer-list { height: 251px; flex: none; margin: 1px 1px 0; border: 1px solid #c8c8c8; background: #fdfdfd; }
.layer-row { height: 26px; background: #e95420; }
.panel-foot { display: flex; justify-content: flex-end; padding: 10px 8px 0 0; }
.commands { width: 36px; margin: 3px 8px 0 20px; flex: none; }
.snaps { width: 36px; margin: 4px 4px 0 0; flex: none; }
.commands, .snaps { display: flex; flex-direction: column; }
.commands i, .snaps i { height: 35px; flex: none; display: flex; align-items: center; justify-content: center; }
.commands svg, .snaps svg { width: 18px; height: 18px; }
.commands hr, .snaps hr { height: 1px; background: #dcdcdc; margin: 7px 0 6px; }
.commands i.chev { margin-top: 30px; }
.snaps i.chev { margin-top: 30px; }
.snaps i.active { height: 34px; }

.palette { height: 34px; flex: none; display: grid; grid-template: 21px 13px / 987px 1fr; }
.swatches { display: flex; overflow: hidden; padding-left: 1px; }
.swatches b { width: 19px; height: 21px; flex: none; }
.swatches .greys { width: 475px; background: #777; }
.scroll { grid-row: 2; background: #f0f0f0; border-top: 1px solid #ccc; padding: 3px 4px; }
.scroll i { display: block; width: 500px; height: 6px; border-radius: 3px; background: #b8b8b8; }
.prev { grid-column: 2; grid-row: 1 / 3; width: 12px; height: 12px; align-self: center; justify-self: center; margin-right: 2px; }
.status { height: 35px; flex: none; display: flex; align-items: center; line-height: 17px; }
.fill { width: 575px; display: grid; grid-template-columns: 51px 1fr; column-gap: 19px; }
.fill span { text-align: right; letter-spacing: .3px; }
.fill b { font-weight: 700; }
.hint { width: 85px; display: flex; flex-direction: column; padding-left: 18px; border-right: 1px solid #d5d5d5; white-space: nowrap; letter-spacing: -.2px; }
.hint span + span { margin-left: -3px; letter-spacing: .4px; }
.pos { width: 81px; display: grid; grid-template-columns: 22px 1fr; padding-left: 10px; }
.pos span:nth-child(even) { text-align: right; }
.zl { width: 22px; margin-left: 10px; }
.rl { width: 23px; margin-left: 10px; }
.small i { width: 21px; }
.small i:last-child { width: 23px; }
.z { width: 100px; }
.r { width: 108px; }
.small b { padding-left: 10px; }
.small.r b { padding-left: 13px; }

/* Dialog */
.dialog { left: 434px; top: 115px; width: 498px; height: 484px; border-radius: 8px 8px 0 0; background: #fafafa; box-shadow: 0 0 1px rgba(0,0,0,.7), 0 3px 20px rgba(0,0,0,.6); }
.dialog > .titlebar { background: #302e2f; border-top: 1px solid #454344; }
.dialog .title { letter-spacing: .23px; }
.notebook { margin: 12px 12px 0; height: 389px; border: 1px solid #c8c8c8; background: #fff; }
.tabs { height: 37px; border-bottom: 1px solid #c8c8c8; background: #fafafa; display: grid; grid-template-columns: 78px 112px 66px 70px; padding-left: 8px; text-align: center; letter-spacing: .15px; }
.tab { height: 37px; padding-top: 9px; }
.tab.on { border-bottom: 3px solid #e95420; }
.tab:nth-child(2) { padding-left: 7px; }
.page { padding: 10px; display: flex; flex-direction: column; }
.digits { height: 34px; display: flex; align-items: center; justify-content: space-between; margin-bottom: 16px; letter-spacing: .17px; }
.spin.focus { width: 118px; border: 2px solid #f2ad94; background: #fff; color: #000; }
.spin.focus b { padding-left: 7px; }
.page label { height: 26px; display: flex; align-items: center; gap: 4px; padding-left: 4px; }
.page label.gap { margin-top: 14px; }
.page label svg { width: 16px; height: 16px; }
.box { width: 16px; height: 16px; border: 1px solid #bdbdbd; border-radius: 3px; background: #fff; }
.actions { display: flex; gap: 4px; justify-content: flex-end; padding: 10px 2px 0; }
.btn { width: 86px; height: 34px; border: 1px solid #c6c6c6; border-radius: 5px; background: #fff; text-align: center; padding-top: 7px; }

/* Dock */
.dock { height: 51px; flex: none; background: #22161f; display: flex; align-items: center; }
.app { position: relative; width: 46px; height: 46px; margin: 1px 4px 0; display: flex; align-items: center; justify-content: center; border-radius: 4px; }
.app.current { background: #4b3f48; }
.app em { position: absolute; left: 21px; bottom: 0; width: 4px; height: 4px; border-radius: 50%; background: #e95420; }
.current em { left: 18px; }
.current em.two { left: 24px; }
.grid { margin-left: auto; margin-right: 17px; }
```
